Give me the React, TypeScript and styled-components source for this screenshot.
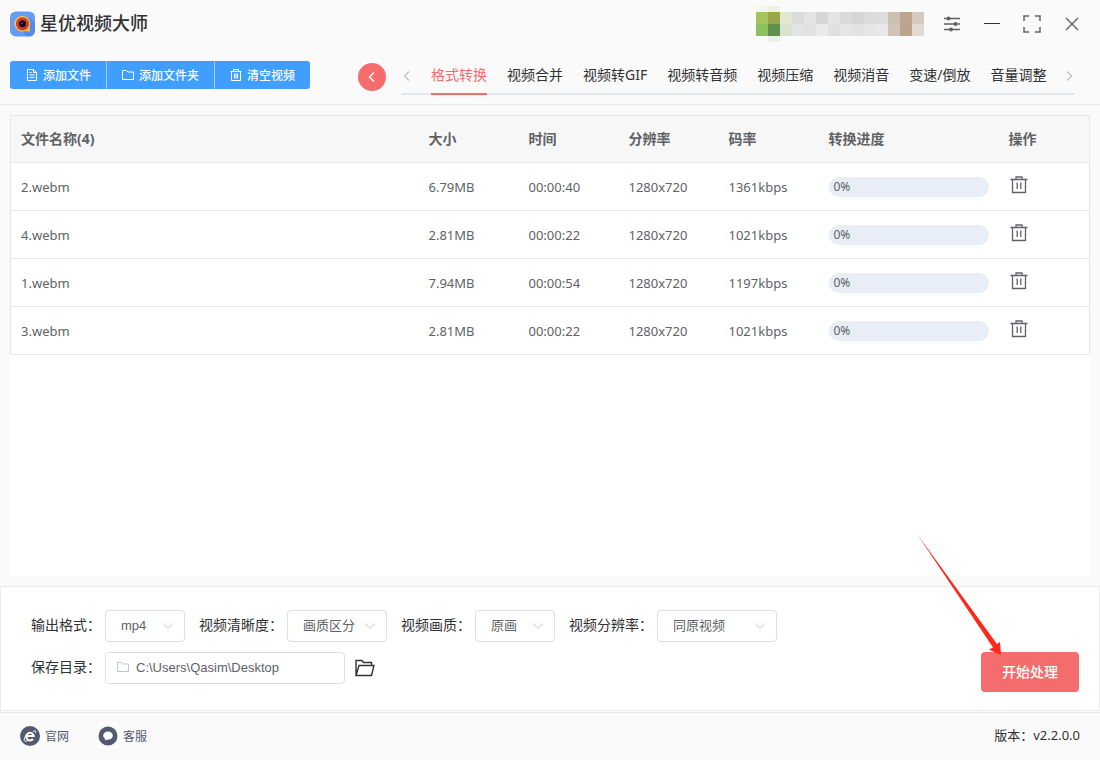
import React from "react";
import styled, { createGlobalStyle } from "styled-components";

const cjk = `"Noto Sans", "Noto Sans CJK SC", sans-serif`;

const GlobalStyle = createGlobalStyle`
  *, *::before, *::after { box-sizing: border-box; }
  body {
    margin: 0;
    background: #fafafa;
    color: #303133;
    font-family: ${cjk};
    font-size: 14px;
  }
  button, input, select { font-family: inherit; margin: 0; }
`;

const Page = styled.div`
  position: relative;
  display: flex;
  flex-direction: column;
  min-height: 100vh;
`;

const TitleBar = styled.header`
  display: flex;
  align-items: center;
  height: 48px;
  padding: 0 18px 0 10px;
`;

const AppTitle = styled.h1`
  margin: 0 auto 0 4px;
  padding-bottom: 2px;
  font-size: 18px;
  line-height: 24px;
  font-weight: 500;
`;

const AccountStrip = styled.svg`
  display: block;
  margin-right: 18px;
`;

const WindowControls = styled.div`
  display: flex;
  gap: 20px;
`;

const IconButton = styled.button`
  display: flex;
  align-items: center;
  justify-content: center;
  width: 20px;
  height: 20px;
  padding: 0;
  border: 0;
  background: none;
  color: #606266;
  cursor: pointer;
`;

const Toolbar = styled.div`
  display: flex;
  align-items: center;
  height: 57px;
  padding: 0 25px 2px 10px;
  border-bottom: 1px solid #ebeef0;
`;

const ButtonGroup = styled.div`
  display: flex;
  border-radius: 3px;
  overflow: hidden;
`;

const FileButton = styled.button`
  display: flex;
  align-items: center;
  gap: 5px;
  height: 28px;
  padding: 0 15px 1px;
  border: 0;
  background: #409eff;
  color: #fff;
  font-size: 12px;
  font-weight: 500;
  cursor: pointer;
  &:first-child { padding-left: 16px; }
  & + & { border-left: 1px solid #a0cfff; }
`;

const BackButton = styled.button`
  display: flex;
  flex: none;
  align-items: center;
  justify-content: center;
  width: 28px;
  height: 28px;
  margin: 3px 15px 0 48px;
  padding: 0;
  border: 0;
  border-radius: 50%;
  background: #f56c6c;
  color: #fff;
`;

const TabBar = styled.nav`
  display: flex;
  flex: 1;
  align-items: center;
  justify-content: space-between;
  height: 40px;
  border-bottom: 2px solid #e4e7ed;
`;

const TabScroll = styled.button`
  display: flex;
  width: 12px;
  padding: 4px 0 0;
  border: 0;
  background: none;
  color: #909399;
`;

const TabList = styled.div`
  display: flex;
  flex: 1;
  gap: 20px;
  padding-left: 18px;
`;

const Tab = styled.button<{ $active?: boolean }>`
  height: 40px;
  margin-bottom: -2px;
  padding: 0;
  border: 0;
  border-bottom: 2px solid ${(p) => (p.$active ? "#f56c6c" : "transparent")};
  background: none;
  color: ${(p) => (p.$active ? "#f56c6c" : "#303133")};
  font-size: 14px;
  white-space: nowrap;
  cursor: pointer;
`;

const FileArea = styled.main`
  flex: 1;
  margin: 10px;
  background: #fff;
`;

const FileTable = styled.table`
  width: 100%;
  table-layout: fixed;
  border-collapse: collapse;
  border: 1px solid #e8e8e8;
  color: #606266;
`;

const HeadCell = styled.th<{ $width?: number }>`
  width: ${(p) => (p.$width ? `${p.$width}px` : "auto")};
  height: 47px;
  padding: 0 10px 2px;
  border-bottom: 1px solid #e8e8e8;
  background: #f7f7f7;
  font-size: 14px;
  font-weight: 700;
  text-align: left;
`;

const Cell = styled.td`
  height: 48px;
  padding: 0 10px;
  border-bottom: 1px solid #e8e8e8;
  font-size: 13px;
`;

const ProgressTrack = styled.div`
  display: flex;
  align-items: center;
  height: 20px;
  padding: 0 5px;
  border-radius: 10px;
  background: #e9edf5;
  font-size: 12px;
`;

const RowAction = styled(IconButton)`
  margin-bottom: 4px;
`;

const OutputPanel = styled.section`
  display: flex;
  align-items: flex-end;
  justify-content: space-between;
  padding: 23px 20px 18px 30px;
  border: 1px solid #ebebeb;
  background: #fff;
`;

const Fields = styled.div`
  display: flex;
  flex-direction: column;
  gap: 10px;
  padding-bottom: 8px;
`;

const FieldRow = styled.div`
  display: flex;
  align-items: center;
  gap: 14px;
`;

const Field = styled.div`
  display: flex;
  align-items: center;
  gap: 4px;
`;

const FieldLabel = styled.label`
  line-height: 20px;
  padding-bottom: 2px;
  white-space: nowrap;
`;

const SelectBox = styled.div<{ $width: number }>`
  position: relative;
  width: ${(p) => p.$width}px;
  svg {
    position: absolute;
    top: 10px;
    right: 11px;
    color: #c0c4cc;
    pointer-events: none;
  }
`;

const controlFont = `"Liberation Sans", "Noto Sans CJK SC", sans-serif`;

const Select = styled.select`
  appearance: none;
  width: 100%;
  height: 32px;
  padding: 0 15px 2px;
  border: 1px solid #dcdfe6;
  border-radius: 4px;
  background: #fff;
  color: #606266;
  && { font-family: ${controlFont}; }
  font-size: 13px;
`;

const PathBox = styled.div`
  display: flex;
  align-items: center;
  gap: 7px;
  width: 240px;
  height: 32px;
  margin-right: 6px;
  padding: 0 11px 2px;
  border: 1px solid #dcdfe6;
  border-radius: 4px;
  color: #c0c4cc;
`;

const PathInput = styled.input`
  flex: 1;
  min-width: 0;
  padding: 0;
  border: 0;
  outline: 0;
  background: none;
  color: #606266;
  && { font-family: ${controlFont}; }
  font-size: 13px;
`;

const StartButton = styled.button`
  width: 98px;
  height: 40px;
  padding: 0 0 2px;
  border: 0;
  border-radius: 4px;
  background: #f56c6c;
  color: #fff;
  font-size: 14px;
  font-weight: 500;
  cursor: pointer;
`;

const Footer = styled.footer`
  display: flex;
  align-items: center;
  gap: 29px;
  height: 48px;
  margin-top: 1px;
  padding: 0 20px 2px;
  border-top: 1px solid #e8e8e8;
`;

const FooterLink = styled.a`
  display: flex;
  align-items: center;
  gap: 5px;
  color: #515a6e;
  font-size: 12px;
  text-decoration: none;
`;

const Version = styled.span`
  margin-left: auto;
  padding-bottom: 2px;
  font-size: 13px;
`;

const Pointer = styled.svg`
  position: absolute;
  right: 98px;
  bottom: 104px;
  pointer-events: none;
`;

const Logo = () => (
  <svg width="26" height="26" viewBox="0 0 26 26" aria-hidden="true">
    <rect width="25" height="25" y="0.500" rx="6" fill="#669bf8" />
    <path d="M19 7 25 11V19.500Q25 25.500 19 25.500H17L12 20Z" fill="#4b7ed8" opacity=".6" />
    <path d="M12.500 5A7.800 7.800 0 1 0 15 20L20 20.500 19.500 16A7.800 7.800 0 0 0 12.500 5Z" fill="#f6c443" />
    <circle cx="12.500" cy="12.800" r="6.600" fill="#d2382c" />
    <circle cx="12.500" cy="12.800" r="3.500" fill="#120c12" />
    <circle cx="12" cy="12.300" r=".8" fill="#5b6a9a" />
  </svg>
);

const stroke = (width: number) => ({
  fill: "none",
  stroke: "currentColor",
  strokeWidth: width,
  "aria-hidden": true,
});

const DocIcon = () => (
  <svg width="12" height="12" viewBox="0 0 12 12" {...stroke(1)}>
    <path d="M1.500 .5H7.500L10.500 3.500V11.500H1.500ZM7.500 .5V3.500H10.500M3.500 3.500H5.500M3.500 6H8.500M3.500 8.500H8.500" />
  </svg>
);
const FolderIcon = () => (
  <svg width="12" height="12" viewBox="0 0 12 12" {...stroke(1)}>
    <path d="M.5 1.500H4.500L6 3H11.500V10.500H.5Z" />
  </svg>
);
const ClearIcon = () => (
  <svg width="12" height="12" viewBox="0 0 12 12" {...stroke(1)}>
    <path d="M.5 2.500H11.500M3.500 2.500V.5H8.500V2.500M1.500 2.500V11.500H10.500V2.500M4.500 4.500V9.500M6 4.500V9.500M7.500 4.500V9.500" />
  </svg>
);
const TrashIcon = () => (
  <svg width="18" height="18" viewBox="0 0 18 18" {...stroke(1.3)}>
    <path d="M.5 3.500H17.500M6 3.500V1H12V3.500M2.500 3.500V16.500H15.500V3.500M7.200 6.500V13M10.800 6.500V13" />
  </svg>
);
const Chevron = ({ dir, weight = 1 }: { dir: "left" | "right" | "down"; weight?: number }) => (
  <svg width="12" height="12" viewBox="0 0 12 12" {...stroke(weight)}>
    <path d={{ left: "M8 1.500 3.500 6 8 10.500", right: "M4 1.500 8.500 6 4 10.500", down: "M1 3.500 6 8.500 11 3.500" }[dir]} />
  </svg>
);
const OpenFolderIcon = () => (
  <svg width="20" height="18" viewBox="0 0 20 18" {...stroke(1.4)}>
    <path d="M1 16.500V1.500H7L8.500 3.500H16.500V6.500M1 16.500 4 6.500H19L16.500 16.500Z" stroke="#303133" />
  </svg>
);
const SettingsIcon = () => (
  <svg width="18" height="18" viewBox="0 0 18 18" {...stroke(1.5)}>
    <path d="M1 3.500H17M1 9H17M1 14.500H17" />
    <g fill="currentColor" stroke="none">
      <circle cx="5.500" cy="3.500" r="1.900" />
      <circle cx="12.500" cy="9" r="1.900" />
      <circle cx="8" cy="14.500" r="1.900" />
    </g>
  </svg>
);
const MinimizeIcon = () => (
  <svg width="18" height="18" viewBox="0 0 18 18" {...stroke(1)}>
    <path d="M1 8.500H17" stroke="#303133" />
  </svg>
);
const MaximizeIcon = () => (
  <svg width="18" height="18" viewBox="0 0 18 18" {...stroke(1.5)}>
    <path d="M1 6V1H6M12 1H17V6M17 12V17H12M6 17H1V12" />
  </svg>
);
const CloseIcon = () => (
  <svg width="18" height="18" viewBox="0 0 18 18" {...stroke(1.4)}>
    <path d="M3 3 15 15M15 3 3 15" />
  </svg>
);
const BrowserIcon = () => (
  <svg width="20" height="20" viewBox="0 0 20 20" aria-hidden="true">
    <circle cx="10" cy="10" r="10" fill="#515a6e" />
    <path d="M6.500 10H13.800A3.800 3.800 0 1 0 13 13" fill="none" stroke="#fff" strokeWidth="2" />
    <path d="M13 5.500Q16.500 3.500 15.500 7M6 9Q3 14.500 5 15.300 6.500 15.600 8.500 14" fill="none" stroke="#fff" strokeWidth="1" />
  </svg>
);
const ChatIcon = () => (
  <svg width="20" height="20" viewBox="0 0 20 20" aria-hidden="true">
    <circle cx="10" cy="10" r="9.500" fill="#515a6e" />
    <path d="M10 5.500C12.800 5.500 14.800 7.200 14.800 9.500 14.800 12 12.800 13.600 10.500 13.600L7 14.300 7.300 12.900C6 12.200 5.200 11 5.200 9.500 5.200 7.200 7.200 5.500 10 5.500Z" fill="#fff" />
  </svg>
);

const mosaic = [
  ["#a8c25c", "#9ba64a", "#e0e8d2", "#dcdcdc", "#e4e4e4", "#d6d6d6", "#e4e4e4", "#dadada", "#d5d5d5", "#dcdcdc", "#dddddd", "#cbbfb4", "#bfa48f", "#d6cac0"],
  ["#8fc060", "#5f904f", "#dae2ce", "#e4e4e4", "#e2e2e2", "#eaeaea", "#e0e0e0", "#e5e5e5", "#e2e2e2", "#e5e5e5", "#e8e8e8", "#cfc4ba", "#bba38d", "#e2d9d2"],
];

const tabs = ["格式转换", "视频合并", "视频转GIF", "视频转音频", "视频压缩", "视频消音", "变速/倒放", "音量调整"];

const files = [
  { name: "2.webm", size: "6.79MB", time: "00:00:40", resolution: "1280x720", rate: "1361kbps" },
  { name: "4.webm", size: "2.81MB", time: "00:00:22", resolution: "1280x720", rate: "1021kbps" },
  { name: "1.webm", size: "7.94MB", time: "00:00:54", resolution: "1280x720", rate: "1197kbps" },
  { name: "3.webm", size: "2.81MB", time: "00:00:22", resolution: "1280x720", rate: "1021kbps" },
];

const options = [
  { id: "format", label: "输出格式：", value: "mp4", width: 80 },
  { id: "clarity", label: "视频清晰度：", value: "画质区分", width: 100 },
  { id: "quality", label: "视频画质：", value: "原画", width: 80 },
  { id: "resolution", label: "视频分辨率：", value: "同原视频", width: 120 },
];

export default function App() {
  return (
    <Page lang="zh-CN">
      <GlobalStyle />
      <TitleBar>
        <Logo />
        <AppTitle>星优视频大师</AppTitle>
        <AccountStrip width="168" height="36" viewBox="0 0 168 36" aria-hidden="true">
          <rect width="12" height="6" fill="#f3f6ee" />
          <rect x="12" width="12" height="6" fill="#eef2e2" />
          <rect x="12" y="30" width="12" height="6" fill="#edf1e8" />
          {mosaic.map((row, y) =>
            row.map((fill, x) => <rect key={`${x}-${y}`} x={x * 12} y={6 + y * 12} width="12" height="12" fill={fill} />)
          )}
        </AccountStrip>
        <WindowControls>
          <IconButton aria-label="设置"><SettingsIcon /></IconButton>
          <IconButton aria-label="最小化"><MinimizeIcon /></IconButton>
          <IconButton aria-label="最大化"><MaximizeIcon /></IconButton>
          <IconButton aria-label="关闭"><CloseIcon /></IconButton>
        </WindowControls>
      </TitleBar>

      <Toolbar>
        <ButtonGroup>
          <FileButton><DocIcon />添加文件</FileButton>
          <FileButton><FolderIcon />添加文件夹</FileButton>
          <FileButton><ClearIcon />清空视频</FileButton>
        </ButtonGroup>
        <BackButton aria-label="返回"><Chevron dir="left" weight={1.4} /></BackButton>
        <TabBar>
          <TabScroll aria-label="向左"><Chevron dir="left" /></TabScroll>
          <TabList>
            {tabs.map((tab, i) => (
              <Tab key={tab} $active={i === 0}>{tab}</Tab>
            ))}
          </TabList>
          <TabScroll aria-label="向右"><Chevron dir="right" /></TabScroll>
        </TabBar>
      </Toolbar>

      <FileArea>
        <FileTable>
          <thead>
            <tr>
              <HeadCell>文件名称(4)</HeadCell>
              <HeadCell $width={100}>大小</HeadCell>
              <HeadCell $width={100}>时间</HeadCell>
              <HeadCell $width={100}>分辨率</HeadCell>
              <HeadCell $width={100}>码率</HeadCell>
              <HeadCell $width={180}>转换进度</HeadCell>
              <HeadCell $width={91}>操作</HeadCell>
            </tr>
          </thead>
          <tbody>
            {files.map((f) => (
              <tr key={f.name}>
                <Cell>{f.name}</Cell>
                <Cell>{f.size}</Cell>
                <Cell>{f.time}</Cell>
                <Cell>{f.resolution}</Cell>
                <Cell>{f.rate}</Cell>
                <Cell><ProgressTrack>0%</ProgressTrack></Cell>
                <Cell><RowAction aria-label="删除"><TrashIcon /></RowAction></Cell>
              </tr>
            ))}
          </tbody>
        </FileTable>
      </FileArea>

      <OutputPanel>
        <Fields>
          <FieldRow>
            {options.map((o) => (
              <Field key={o.id}>
                <FieldLabel htmlFor={o.id}>{o.label}</FieldLabel>
                <SelectBox $width={o.width}>
                  <Select id={o.id} defaultValue={o.value}>
                    <option>{o.value}</option>
                  </Select>
                  <Chevron dir="down" />
                </SelectBox>
              </Field>
            ))}
          </FieldRow>
          <Field>
            <FieldLabel htmlFor="path">保存目录：</FieldLabel>
            <PathBox>
              <FolderIcon />
              <PathInput id="path" defaultValue="C:\Users\Qasim\Desktop" />
            </PathBox>
            <IconButton aria-label="打开目录"><OpenFolderIcon /></IconButton>
          </Field>
        </Fields>
        <StartButton>开始处理</StartButton>
      </OutputPanel>

      <Footer>
        <FooterLink href="#site"><BrowserIcon />官网</FooterLink>
        <FooterLink href="#support"><ChatIcon />客服</FooterLink>
        <Version>版本：v2.2.0.0</Version>
      </Footer>

      <Pointer width="86" height="122" viewBox="0 0 86 122" aria-hidden="true">
        <path d="M1 0 81 110 84 108 85 121 73 115.500 77 113.500Z" fill="#fb2a1a" />
      </Pointer>
    </Page>
  );
}
